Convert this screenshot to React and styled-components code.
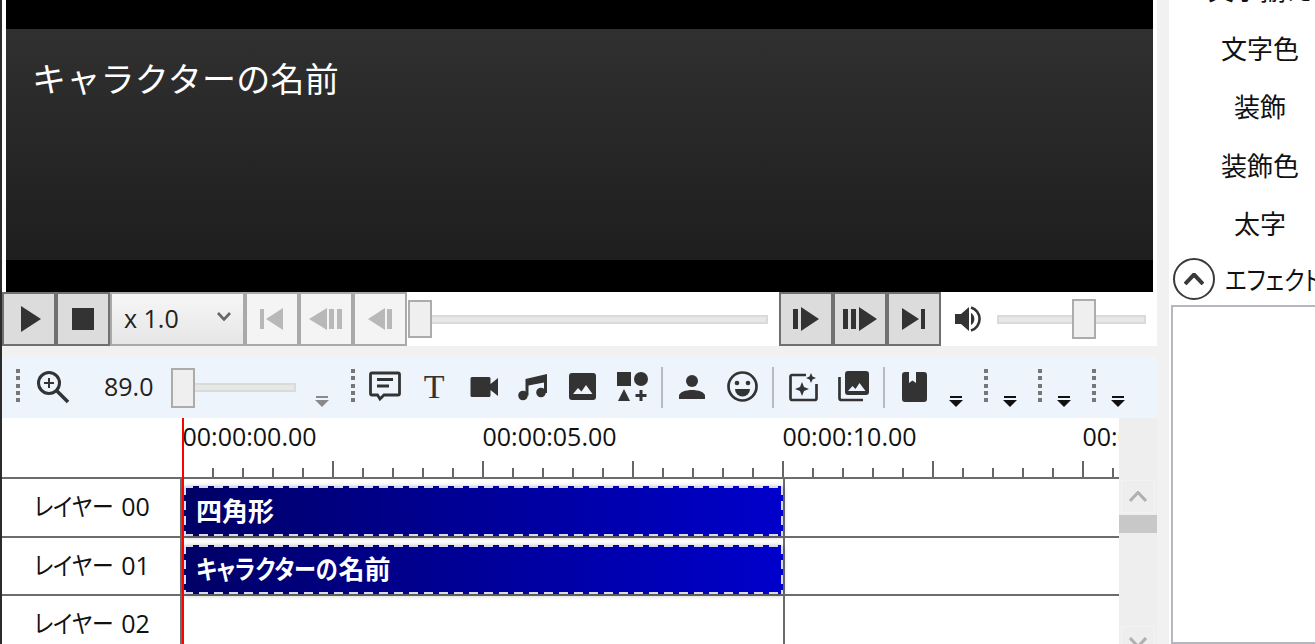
import React from 'react';
import styled, { createGlobalStyle } from 'styled-components';

const GlobalStyle = createGlobalStyle`
	html, body {
		margin: 0;
		height: 100%;
		overflow: hidden;
		background: #fff;
	}
	* {
		box-sizing: border-box;
	}
`;

const ICON = '#333';
const LINE = '#6c6c6c';

const Page = styled.div`
	display: flex;
	width: 1315px;
	height: 644px;
	overflow: hidden;
	font-family: 'Open Sans', 'Noto Sans CJK JP', sans-serif;
	color: #111;
	background: #fff;
`;

const LeftColumn = styled.div`
	width: 1157px;
	flex: none;
	display: flex;
	flex-direction: column;
	border-left: 2px solid #2b2b2b;
`;

const Gutter = styled.div`
	width: 12px;
	flex: none;
	background: #f1f1f1;
`;

/* preview */
const PreviewWrap = styled.div`
	height: 292px;
	flex: none;
	padding: 0 4px;
`;

const Preview = styled.div`
	height: 100%;
	background: #000;
	padding: 29px 0 32px;
`;

const Frame = styled.div`
	height: 100%;
	background: linear-gradient(180deg, #303030, #1e1e1e);
	padding: 25px 26px;
	color: #fff;
	font-size: 34px;
	font-weight: 400;
	line-height: 48px;
	letter-spacing: 0.25px;
	font-family: 'Noto Sans CJK JP', sans-serif;
`;

/* player bar */
const PlayerBar = styled.div`
	height: 54px;
	flex: none;
	display: flex;
	align-items: stretch;
	background: #fff;
`;

const PlayerButton = styled.div`
	width: 54px;
	flex: none;
	display: flex;
	align-items: center;
	justify-content: center;
	margin-left: ${p => p.$ml || 0}px;
	border: 2px solid ${p => (p.$disabled ? '#a9a9a9' : '#707070')};
	background: ${p => (p.$disabled ? '#f4f4f4' : '#dcdcdc')};
	color: ${p => (p.$disabled ? '#b8b8b8' : ICON)};
`;

const SpeedSelect = styled.div`
	width: 135px;
	flex: none;
	display: flex;
	align-items: center;
	justify-content: space-between;
	padding: 0 12px 2px 12px;
	border: 2px solid #a9a9a9;
	background: linear-gradient(180deg, #f6f6f6, #e6e6e6);
	color: #222;
	font-size: 25px;

	svg {
		color: #666;
		margin-top: -4px;
	}
`;

const Slider = styled.div`
	position: relative;
	width: ${p => p.$w}px;
	height: ${p => p.$h}px;
	flex: none;
	margin: ${p => p.$m || '0'};
	align-self: center;
	display: flex;
	align-items: center;
`;

const SliderTrack = styled.div`
	width: 100%;
	height: 9px;
	background: #e6e8e6;
	border: 2px solid #d9dbd9;
`;

const SliderThumb = styled.div`
	position: absolute;
	top: 0;
	left: ${p => p.$left}px;
	width: 24px;
	height: 100%;
	background: #efefef;
	border: 2px solid #acacac;
`;

const VolumeIcon = styled.div`
	display: flex;
	align-items: center;
	margin-left: 14px;
	color: ${ICON};
`;

const Separator = styled.div`
	height: 11px;
	flex: none;
	background: #f1f1f1;
`;

/* toolbar */
const Toolbar = styled.div`
	height: 61px;
	flex: none;
	display: flex;
	align-items: center;
	background: #eef4fc;
	color: ${ICON};
`;

const Grip = styled.div`
	width: 4px;
	flex: none;
	display: flex;
	flex-direction: column;
	gap: 3.3px;
	align-self: flex-start;
	margin: 12px 0 0 ${p => p.$left}px;
`;

const GripDot = styled.span`
	display: block;
	width: 4px;
	height: 4px;
	background: #777;
`;

const ToolIcon = styled.div`
	width: ${p => p.$w || 50}px;
	height: 40px;
	flex: none;
	display: flex;
	align-items: center;
	justify-content: center;
	margin: -2px 0 0 ${p => p.$ml || 0}px;
`;

const SerifT = styled.span`
	font-family: 'Liberation Serif', serif;
	font-size: 34px;
	line-height: 40px;
	color: #333;
`;

const ZoomValue = styled.div`
	width: 60px;
	flex: none;
	margin: -3px 0 0 18px;
	font-size: 25px;
	line-height: 40px;
	color: #222;
`;

const Divider = styled.div`
	width: 2px;
	height: 41px;
	flex: none;
	margin: 0 ${p => p.$right ?? 5}px 0 ${p => p.$left ?? 5}px;
	background: #b6bcc2;
`;

const DropCaret = styled.div`
	flex: none;
	width: 14px;
	display: flex;
	flex-direction: column;
	align-items: center;
	gap: 2px;
	align-self: flex-start;
	margin: 39px 0 0 ${p => p.$left}px;

	&::before {
		content: '';
		width: 12px;
		height: 2px;
		background: ${p => (p.$muted ? '#8a8a8a' : '#111')};
	}
	&::after {
		content: '';
		border-left: 7px solid transparent;
		border-right: 7px solid transparent;
		border-top: 7px solid ${p => (p.$muted ? '#8a8a8a' : '#111')};
	}
`;

/* timeline */
const Timeline = styled.div`
	position: relative;
	flex: 1;
	min-height: 0;
	display: flex;
	overflow: hidden;
`;

const TimelineMain = styled.div`
	width: 1117px;
	flex: none;
	overflow: hidden;
	background: #fff;
`;

const Ruler = styled.div`
	height: 61px;
	padding-left: 180px;
	border-bottom: 2px solid ${LINE};
	overflow: hidden;
`;

const TimeLabels = styled.div`
	display: flex;
	height: 35px;
	margin-left: 0.5px;
`;

const TimeLabel = styled.div`
	width: 300px;
	flex: none;
	font-size: 25px;
	line-height: 37px;
	white-space: nowrap;
	color: #111;
`;

const Ticks = styled.div`
	height: 24px;
	display: flex;
	align-items: flex-end;
`;

const Tick = styled.span`
	width: 30px;
	flex: none;
	height: ${p => (p.$major ? 16 : 9)}px;
	border-left: 2px solid #666;
`;

const Row = styled.div`
	height: 58.5px;
	display: flex;
	border-bottom: 2px solid ${LINE};
`;

const LayerName = styled.div`
	width: 180px;
	flex: none;
	padding-left: 2px;
	text-align: center;
	line-height: 55px;
	border-right: 2px solid ${LINE};
	font-size: 25px;
`;

/* kana in the reference font is condensed, so squeeze it sideways */
const Kana = styled.span`
	display: inline-block;
	font-feature-settings: 'palt';
	transform: scaleX(${p => p.$scale || 0.87});
	transform-origin: left center;
	margin-right: ${p => p.$trim}px;
`;

const Track = styled.div`
	flex: 1;
	min-width: 0;
`;

const TrackFill = styled.div`
	width: 603px;
	height: 100%;
	padding: 7px 0 0 2px;
	border-right: 2px solid ${LINE};
`;

const DASH = '#d9d9f2';

const Clip = styled.div`
	height: 100%;
	display: flex;
	align-items: center;
	padding: 0 0 2px 12px;
	border-radius: 2px;
	background:
		repeating-linear-gradient(90deg, ${DASH} 0 9px, transparent 9px 15px) left top / 100% 2px no-repeat,
		repeating-linear-gradient(90deg, ${DASH} 0 9px, transparent 9px 15px) left bottom / 100% 2px no-repeat,
		repeating-linear-gradient(180deg, ${DASH} 0 9px, transparent 9px 15px) left top / 2px 100% no-repeat,
		repeating-linear-gradient(180deg, ${DASH} 0 9px, transparent 9px 15px) right top / 2px 100% no-repeat,
		linear-gradient(90deg, #000066, #0000cc);
	box-shadow: 0 1px 5px rgba(0, 0, 0, 0.3);
	color: #fff;
	font-size: 26px;
	font-weight: 700;
	white-space: nowrap;
`;

const Playhead = styled.div`
	position: absolute;
	top: 0;
	bottom: 0;
	left: 180px;
	width: 2px;
	background: #f00;
`;

const ScrollBar = styled.div`
	width: 38px;
	flex: none;
	display: flex;
	flex-direction: column;
	background: #eeeeee;
	padding-top: 62px;
`;

const ScrollArrow = styled.div`
	height: 33px;
	flex: none;
	display: flex;
	align-items: center;
	justify-content: center;
	margin: 0 2px ${p => p.$mb || 0}px;
	border: 1px solid #f3f3f3;
	color: #b0b0b0;
`;

const ScrollThumb = styled.div`
	height: 18px;
	flex: none;
	margin-top: 2px;
	background: #c8c8c8;
`;

const ScrollRest = styled.div`
	flex: 1;
`;

/* right panel */
const SidePanel = styled.div`
	flex: 1;
	min-width: 0;
	display: flex;
	flex-direction: column;
	overflow: hidden;
	background: #fff;
`;

const PropertyList = styled.div`
	margin-top: -40px;
	flex: none;
`;

const PropertyRow = styled.div`
	width: 182px;
	height: 58.5px;
	display: flex;
	align-items: center;
	justify-content: center;
	font-size: 26px;
	white-space: nowrap;
`;

const FoldHeader = styled.div`
	height: 52px;
	flex: none;
	display: flex;
	align-items: center;
	padding: 0 0 0 4px;
	gap: 10px;
	font-size: 26px;
	white-space: nowrap;
`;

const FoldButton = styled.div`
	width: 42px;
	height: 42px;
	flex: none;
	display: flex;
	align-items: center;
	justify-content: center;
	border: 2px solid #3a3a3a;
	border-radius: 50%;
	color: #3a3a3a;
`;

const EffectBox = styled.div`
	flex: 1;
	margin-left: 2px;
	width: 200px;
	border: 2px solid #b6b6be;
	background: #fff;
`;

/* drawings */
const Svg = ({ w, h = w, children }) => (
	<svg width={w} height={h} viewBox={`0 0 ${w} ${h}`} fill="currentColor">
		{children}
	</svg>
);

const TB = '#eef4fc';

const PlayIcon = () => <Svg w={26}><path d="M5 0 25 13 5 26z" /></Svg>;
const StopIcon = () => <Svg w={22}><rect width="22" height="22" /></Svg>;
const FirstIcon = () => <Svg w={24}><path d="M0 2h4v20H0zM23 1v22L6 12z" /></Svg>;
const PrevFrameIcon = () => <Svg w={34} h={24}><path d="M18 1v22L0 12zM20 2h5v20h-5zM28 2h5v20h-5z" /></Svg>;
const PrevIcon = () => <Svg w={24}><path d="M17 1v22L0 12zM19 2h5v20h-5z" /></Svg>;
const NextIcon = () => <Svg w={26} h={24}><path d="M0 2h5v20H0zM8 0l18 12L8 24z" /></Svg>;
const NextFrameIcon = () => <Svg w={34} h={24}><path d="M0 2h5v20H0zM8 2h5v20H8zM16 0l18 12-18 12z" /></Svg>;
const LastIcon = () => <Svg w={24}><path d="M0 1l17 11L0 23zM19 2h4v20h-4z" /></Svg>;

const VolumeGlyph = () => (
	<Svg w={28} h={26}>
		<path d="M0 8h6l8-7v24l-8-7H0z" />
		<path d="M16 7a7 7 0 0 1 0 12z" />
		<path d="M16 1.5a12 12 0 0 1 0 23" fill="none" stroke="currentColor" strokeWidth="2.6" />
	</Svg>
);

const Chevron = ({ w = 14, h = 9, up, width = 2.6 }) => (
	<svg width={w} height={h} viewBox={`0 0 ${w} ${h}`} fill="none" stroke="currentColor" strokeWidth={width}>
		<path d={up ? `M1 ${h - 1}L${w / 2} 1.5 ${w - 1} ${h - 1}` : `M1 1L${w / 2} ${h - 1.5} ${w - 1} 1`} />
	</svg>
);

const ZoomGlyph = () => (
	<Svg w={34}>
		<circle cx="13" cy="13" r="10.5" fill="none" stroke="currentColor" strokeWidth="3" />
		<path d="M13 8v10M8 13h10" stroke="currentColor" strokeWidth="2" />
		<path d="M21 21l11 11" stroke="currentColor" strokeWidth="3.6" />
	</Svg>
);

const CommentGlyph = () => (
	<Svg w={32} h={31}>
		<path d="M3 2h26a1.5 1.5 0 0 1 1.5 1.5v19a1.5 1.5 0 0 1-1.5 1.5H15l-4 4-2.5-4H3a1.5 1.5 0 0 1-1.5-1.5v-19A1.5 1.5 0 0 1 3 2z" fill="none" stroke="currentColor" strokeWidth="2.8" />
		<path d="M8 8.5h16M8 15h12" stroke="currentColor" strokeWidth="2.8" />
	</Svg>
);

const VideoGlyph = () => (
	<Svg w={28} h={22}>
		<path d="M2 1h17a1.5 1.5 0 0 1 1.5 1.5V8L28 2v18l-7.5-6v5.500a1.500 1.500 0 0 1-1.500 1.500H2a1.500 1.500 0 0 1-1.500-1.500v-17A1.500 1.500 0 0 1 2 1z" />
	</Svg>
);

const MusicGlyph = () => (
	<Svg w={30} h={28}>
		<circle cx="5" cy="22.500" r="4.800" />
		<circle cx="23" cy="19.500" r="4.800" />
		<path d="M7.500 22.500V6L29 1v19h-3V9.500L10.500 12.500v10z" />
	</Svg>
);

const ImageGlyph = () => (
	<Svg w={27}>
		<rect width="27" height="27" rx="3" />
		<path d="M4 21l5-6 3.500 3.500L17 12l6.500 9z" fill={TB} />
	</Svg>
);

const ShapesGlyph = () => (
	<Svg w={31} h={30}>
		<rect width="14" height="14" />
		<circle cx="24" cy="7" r="7" />
		<path d="M7 17l6 12H1z" />
		<path d="M24 18v11M18.500 23.500h11" stroke="currentColor" strokeWidth="3" />
	</Svg>
);

const PersonGlyph = () => (
	<Svg w={26} h={24}>
		<circle cx="13" cy="6" r="6" />
		<path d="M0 24v-3c0-4 7-6 13-6s13 2 13 6v3z" />
	</Svg>
);

const SmileGlyph = () => (
	<Svg w={31}>
		<circle cx="15.500" cy="15.500" r="14" fill="none" stroke="currentColor" strokeWidth="2.700" />
		<circle cx="10" cy="12" r="2.300" />
		<circle cx="21" cy="12" r="2.300" />
		<path d="M8 18h15a7.500 7.500 0 0 1-15 0z" />
	</Svg>
);

const SparkleGlyph = () => (
	<Svg w={29} h={30}>
		<path d="M17 3H3a1.500 1.500 0 0 0-1.500 1.500v22A1.500 1.500 0 0 0 3 28h23a1.500 1.500 0 0 0 1.500-1.500V12" fill="none" stroke="currentColor" strokeWidth="2.700" />
		<path d="M13 10l2 5 5 2-5 2-2 5-2-5-5-2 5-2z" />
		<path d="M22 1l1.500 3.500L27 6l-3.500 1.500L22 11l-1.500-3.500L17 6l3.500-1.500z" />
	</Svg>
);

const LibraryGlyph = () => (
	<Svg w={31}>
		<path d="M1.500 6v21a2 2 0 0 0 2 2H25" fill="none" stroke="currentColor" strokeWidth="2.700" />
		<rect x="7" y="0" width="24" height="24" rx="3" />
		<path d="M10 20l4.500-5 3 3 4-6 6 8z" fill={TB} />
	</Svg>
);

const BookmarkGlyph = () => (
	<Svg w={25} h={30}>
		<path d="M3 0h4v11l3.500-2.500L14 11V0h8a3 3 0 0 1 3 3v24a3 3 0 0 1-3 3H3a3 3 0 0 1-3-3V3a3 3 0 0 1 3-3z" />
	</Svg>
);

const ToolGrip = ({ left }) => (
	<Grip $left={left}>
		{[0, 1, 2, 3, 4].map(i => (
			<GripDot key={i} />
		))}
	</Grip>
);

const TICKS = Array.from({ length: 32 }, (_, i) => i);
const PROPERTIES = ['文字揃え', '文字色', '装飾', '装飾色', '太字'];
const LAYERS = ['00', '01', '02'];

const App = () => (
	<Page>
		<GlobalStyle />
		<LeftColumn>
			<PreviewWrap>
				<Preview>
					<Frame>キャラクターの名前</Frame>
				</Preview>
			</PreviewWrap>

			<PlayerBar>
				<PlayerButton><PlayIcon /></PlayerButton>
				<PlayerButton><StopIcon /></PlayerButton>
				<SpeedSelect>
					x 1.0
					<Chevron />
				</SpeedSelect>
				<PlayerButton $disabled><FirstIcon /></PlayerButton>
				<PlayerButton $disabled><PrevFrameIcon /></PlayerButton>
				<PlayerButton $disabled><PrevIcon /></PlayerButton>
				<Slider $w={360} $h={38} $m="0 0 0 1px"><SliderTrack /><SliderThumb $left={0} /></Slider>
				<PlayerButton $ml={11}><NextIcon /></PlayerButton>
				<PlayerButton><NextFrameIcon /></PlayerButton>
				<PlayerButton><LastIcon /></PlayerButton>
				<VolumeIcon><VolumeGlyph /></VolumeIcon>
				<Slider $w={149} $h={40} $m="0 0 0 14px"><SliderTrack /><SliderThumb $left={75} /></Slider>
			</PlayerBar>

			<Separator />

			<Toolbar>
				<ToolGrip left={14} />
				<ToolIcon $w={66}><ZoomGlyph /></ToolIcon>
				<ZoomValue>89.0</ZoomValue>
				<Slider $w={125} $h={40} $m="0 0 0 7px"><SliderTrack /><SliderThumb $left={0} /></Slider>
				<DropCaret $muted $left={19} />
				<ToolGrip left={22} />
				<ToolIcon $ml={5} $w={49.5}><CommentGlyph /></ToolIcon>
				<ToolIcon $w={49.5}><SerifT>T</SerifT></ToolIcon>
				<ToolIcon $w={49.5}><VideoGlyph /></ToolIcon>
				<ToolIcon $w={49.5}><MusicGlyph /></ToolIcon>
				<ToolIcon $w={49.5}><ImageGlyph /></ToolIcon>
				<ToolIcon $w={49.5}><ShapesGlyph /></ToolIcon>
				<Divider $left={4} $right={4} />
				<ToolIcon><PersonGlyph /></ToolIcon>
				<ToolIcon><SmileGlyph /></ToolIcon>
				<Divider $left={5} $right={4} />
				<ToolIcon><SparkleGlyph /></ToolIcon>
				<ToolIcon><LibraryGlyph /></ToolIcon>
				<Divider $left={5} $right={4} />
				<ToolIcon><BookmarkGlyph /></ToolIcon>
				<DropCaret $left={10} />
				<ToolGrip left={21} />
				<DropCaret $left={15} />
				<ToolGrip left={21} />
				<DropCaret $left={15} />
				<ToolGrip left={21} />
				<DropCaret $left={15} />
			</Toolbar>

			<Timeline>
				<TimelineMain>
					<Ruler>
						<TimeLabels>
							<TimeLabel>00:00:00.00</TimeLabel>
							<TimeLabel>00:00:05.00</TimeLabel>
							<TimeLabel>00:00:10.00</TimeLabel>
							<TimeLabel>00:00:15.00</TimeLabel>
						</TimeLabels>
						<Ticks>
							{TICKS.map(i => (
								<Tick key={i} $major={i % 5 === 0} />
							))}
						</Ticks>
					</Ruler>
					{LAYERS.map((id, i) => (
						<Row key={id}>
							<LayerName><Kana $trim={-11}>レイヤー</Kana> {id}</LayerName>
							<Track>
								<TrackFill>
									{i === 0 && <Clip>四角形</Clip>}
									{i === 1 && <Clip><Kana $scale={0.85} $trim={-24}>キャラクターの</Kana>名前</Clip>}
								</TrackFill>
							</Track>
						</Row>
					))}
				</TimelineMain>
				<ScrollBar>
					<ScrollArrow><Chevron up w={18} h={11} width={3} /></ScrollArrow>
					<ScrollThumb />
					<ScrollRest />
					<ScrollArrow $mb={-15}><Chevron w={18} h={11} width={3} /></ScrollArrow>
				</ScrollBar>
				<Playhead />
			</Timeline>
		</LeftColumn>

		<Gutter />

		<SidePanel>
			<PropertyList>
				{PROPERTIES.map(name => (
					<PropertyRow key={name}>{name}</PropertyRow>
				))}
			</PropertyList>
			<FoldHeader>
				<FoldButton><Chevron up w={20} h={12} width={4} /></FoldButton>
				<Kana $trim={-14}>エフェクト</Kana>
			</FoldHeader>
			<EffectBox />
		</SidePanel>
	</Page>
);

export default App;
